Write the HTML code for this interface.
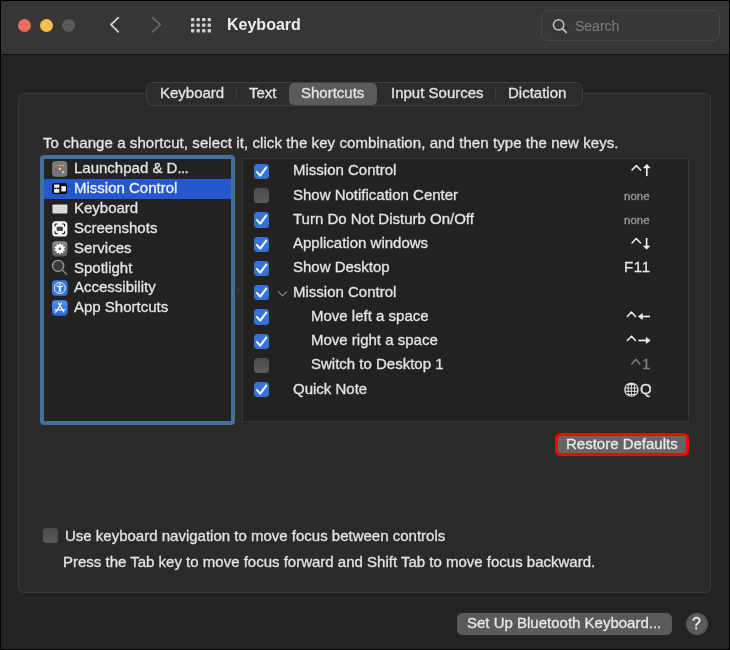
<!DOCTYPE html>
<html><head><meta charset="utf-8">
<style>
*{margin:0;padding:0;box-sizing:border-box}
html,body{width:730px;height:650px;overflow:hidden;background:#000}
body{position:relative;font-family:"Liberation Sans",sans-serif;color:#e4e4e4;font-size:15px}
.a{position:absolute}
.t{position:absolute;white-space:pre;line-height:20px;font-size:15px;will-change:transform;-webkit-text-stroke-width:0.3px}
</style></head><body>
<div class="a" style="left:1px;top:1px;width:728px;height:648px;background:#242322"></div>
<div class="a" style="left:1px;top:1px;width:728px;height:53px;background:#373635"></div>
<div class="a" style="left:1px;top:54px;width:728px;height:1px;background:#121212"></div>
<div class="a" style="left:17.55px;top:18.55px;width:13.5px;height:13.5px;border-radius:50%;background:#ec6a5e"></div>
<div class="a" style="left:39.55px;top:18.55px;width:13.5px;height:13.5px;border-radius:50%;background:#f4bf4f"></div>
<div class="a" style="left:61.65px;top:18.55px;width:13.5px;height:13.5px;border-radius:50%;background:#5b5b5b"></div>
<svg class="a" style="left:0;top:0" width="320" height="54"><polyline points="118.3,17.6 111.0,24.7 118.3,31.8" fill="none" stroke="#d2d2d2" stroke-width="1.8" stroke-linecap="round" stroke-linejoin="round"/><polyline points="152.5,17.6 160.3,24.7 152.5,31.8" fill="none" stroke="#676767" stroke-width="1.8" stroke-linecap="round" stroke-linejoin="round"/><g fill="#d0d0d0"><rect x="191.00" y="18.00" width="3.3" height="3.3" rx=".7"/><rect x="196.55" y="18.00" width="3.3" height="3.3" rx=".7"/><rect x="202.10" y="18.00" width="3.3" height="3.3" rx=".7"/><rect x="207.65" y="18.00" width="3.3" height="3.3" rx=".7"/><rect x="191.00" y="23.55" width="3.3" height="3.3" rx=".7"/><rect x="196.55" y="23.55" width="3.3" height="3.3" rx=".7"/><rect x="202.10" y="23.55" width="3.3" height="3.3" rx=".7"/><rect x="207.65" y="23.55" width="3.3" height="3.3" rx=".7"/><rect x="191.00" y="29.10" width="3.3" height="3.3" rx=".7"/><rect x="196.55" y="29.10" width="3.3" height="3.3" rx=".7"/><rect x="202.10" y="29.10" width="3.3" height="3.3" rx=".7"/><rect x="207.65" y="29.10" width="3.3" height="3.3" rx=".7"/></g></svg>
<div class="t" style="left:227.20px;top:15.46px;font-size:16px;color:#ececec;font-weight:bold;-webkit-text-stroke-width:0">Keyboard</div>
<div class="a" style="left:541px;top:10px;width:179px;height:31px;border:1px solid #484746;border-radius:7px;background:#383736"></div>
<svg class="a" style="left:540px;top:10px" width="40" height="31"><circle cx="18.6" cy="14.9" r="5.2" fill="none" stroke="#c2c2c2" stroke-width="1.5"/><line x1="22.4" y1="18.7" x2="26.2" y2="22.4" stroke="#c2c2c2" stroke-width="1.7" stroke-linecap="round"/></svg>
<div class="t" style="left:575.00px;top:15.95px;font-size:14px;color:#787878;-webkit-text-stroke-width:0.15px">Search</div>
<div class="a" style="left:18px;top:93px;width:693px;height:500px;border:1px solid #3a3a39;border-radius:6px;background:#2b2a29"></div>
<div class="a" style="left:146px;top:81.5px;width:437px;height:24.5px;border:1px solid #3f3f3f;border-radius:7px;background:#2c2c2c"></div>
<div class="a" style="left:289px;top:83px;width:88px;height:22px;border-radius:5px;background:#5b5b5b"></div>
<div class="a" style="left:235.5px;top:87px;width:1px;height:14px;background:#3b3b3b"></div>
<div class="a" style="left:495px;top:87px;width:1px;height:14px;background:#3b3b3b"></div>
<div class="t" style="left:159.50px;top:82.80px;color:#e4e4e4">Keyboard</div>
<div class="t" style="left:248.80px;top:82.80px;color:#e4e4e4">Text</div>
<div class="t" style="left:301.00px;top:82.80px;color:#e4e4e4">Shortcuts</div>
<div class="t" style="left:390.50px;top:82.80px;color:#e4e4e4">Input Sources</div>
<div class="t" style="left:507.50px;top:82.80px;color:#e4e4e4">Dictation</div>
<div class="t" style="left:42.50px;top:132.60px;letter-spacing:0.08px">To change a shortcut, select it, click the key combination, and then type the new keys.</div>
<div class="a" style="left:40px;top:155px;width:195px;height:270px;border:4px solid #44709e;border-radius:4px;background:#232221"></div>
<div class="a" style="left:44px;top:179px;width:187px;height:20px;background:#2558cd"></div>
<div class="t" style="left:73.50px;top:158.20px">Launchpad &amp; D<span style="letter-spacing:-0.6px">...</span></div>
<div class="t" style="left:73.50px;top:178.08px;color:#f2f2f2">Mission Control</div>
<div class="t" style="left:73.50px;top:197.96px">Keyboard</div>
<div class="t" style="left:73.50px;top:217.84px">Screenshots</div>
<div class="t" style="left:73.50px;top:237.72px">Services</div>
<div class="t" style="left:73.50px;top:257.60px">Spotlight</div>
<div class="t" style="left:73.50px;top:277.48px">Accessibility</div>
<div class="t" style="left:73.50px;top:297.36px">App Shortcuts</div>
<svg class="a" style="left:52px;top:161.00px" width="16" height="16" viewBox="0 0 16 16"><rect x="0.1" y="0.1" width="15.2" height="15.6" rx="3.6" fill="#7a7a7a"/><rect x="3.10" y="3.65" width="2" height="1.7" rx=".3" fill="#3fae45"/><rect x="6.80" y="3.65" width="2" height="1.7" rx=".3" fill="#f0b42a"/><rect x="10.10" y="3.65" width="2" height="1.7" rx=".3" fill="#eeb02a"/><rect x="3.10" y="7.05" width="2" height="1.7" rx=".3" fill="#e23232"/><rect x="6.80" y="7.05" width="2" height="1.7" rx=".3" fill="#e6e6e6"/><rect x="10.10" y="7.05" width="2" height="1.7" rx=".3" fill="#ef4b3c"/><rect x="3.10" y="10.25" width="2" height="1.7" rx=".3" fill="#8f45dd"/><rect x="6.80" y="10.25" width="2" height="1.7" rx=".3" fill="#2d7ae6"/><rect x="10.10" y="10.25" width="2" height="1.7" rx=".3" fill="#d8d8d8"/></svg>
<svg class="a" style="left:52px;top:180.90px" width="16" height="16" viewBox="0 0 16 16"><rect x="0.1" y="2.2" width="15" height="10.9" rx="2" fill="#050505"/><rect x="2" y="3.4" width="5.4" height="3.4" rx=".6" fill="#f0f0f0"/><rect x="2" y="8" width="5.4" height="3.8" rx=".6" fill="#f0f0f0"/><rect x="9.3" y="5" width="4.6" height="5.5" rx=".6" fill="#f0f0f0"/><rect x="4.2" y="7" width="1" height="1" fill="#3c3"/><rect x="11" y="10.3" width="2" height=".8" fill="#a4e"/></svg>
<svg class="a" style="left:51px;top:200.80px" width="18" height="16" viewBox="-1 0 18 16"><rect x="-0.3" y="3.1" width="16" height="9.8" rx="1" fill="#101010" opacity=".6"/><rect x="0.4" y="3.6" width="15" height="8.8" rx=".6" fill="#dedede"/><g fill="#c4c4c4"><rect x="1.4" y="5.9" width="13" height=".45"/><rect x="1.4" y="8" width="13" height=".45"/><rect x="1.4" y="10.1" width="13" height=".45"/></g></svg>
<svg class="a" style="left:52px;top:220.70px" width="16" height="16" viewBox="0 0 16 16"><rect x="0.2" y="0.3" width="15.2" height="15.2" rx="3.6" fill="#f4f4f4"/><path d="M3 5.4V3.8Q3 3 3.8 3H5.4M10.2 3h1.6q.8 0 .8.8V5.4M12.6 10.2v1.6q0 .8-.8.8H10.2M5.4 12.6H3.8Q3 12.6 3 11.8V10.2" fill="none" stroke="#151515" stroke-width="1.1"/><rect x="4.6" y="5.8" width="6.4" height="4.2" rx="1.3" fill="#4a4a4a"/><circle cx="7.8" cy="7.9" r="1.3" fill="#2a2a2a"/><circle cx="7.8" cy="7.9" r=".5" fill="#ddd"/></svg>
<svg class="a" style="left:52px;top:240.60px" width="16" height="16" viewBox="0 0 16 16"><defs><linearGradient id="gs" x1="0" y1="0" x2="0" y2="1"><stop offset="0" stop-color="#8c8c8c"/><stop offset="1" stop-color="#5c5c5c"/></linearGradient></defs><rect x="0.2" y="0.2" width="15.2" height="15.2" rx="3.6" fill="url(#gs)"/><rect x="7.0" y="2.5" width="1.6" height="2.6" rx=".3" transform="rotate(0 7.8 7.8)" fill="#fafafa"/><rect x="7.0" y="2.5" width="1.6" height="2.6" rx=".3" transform="rotate(36 7.8 7.8)" fill="#fafafa"/><rect x="7.0" y="2.5" width="1.6" height="2.6" rx=".3" transform="rotate(72 7.8 7.8)" fill="#fafafa"/><rect x="7.0" y="2.5" width="1.6" height="2.6" rx=".3" transform="rotate(108 7.8 7.8)" fill="#fafafa"/><rect x="7.0" y="2.5" width="1.6" height="2.6" rx=".3" transform="rotate(144 7.8 7.8)" fill="#fafafa"/><rect x="7.0" y="2.5" width="1.6" height="2.6" rx=".3" transform="rotate(180 7.8 7.8)" fill="#fafafa"/><rect x="7.0" y="2.5" width="1.6" height="2.6" rx=".3" transform="rotate(216 7.8 7.8)" fill="#fafafa"/><rect x="7.0" y="2.5" width="1.6" height="2.6" rx=".3" transform="rotate(252 7.8 7.8)" fill="#fafafa"/><rect x="7.0" y="2.5" width="1.6" height="2.6" rx=".3" transform="rotate(288 7.8 7.8)" fill="#fafafa"/><rect x="7.0" y="2.5" width="1.6" height="2.6" rx=".3" transform="rotate(324 7.8 7.8)" fill="#fafafa"/><circle cx="7.8" cy="7.8" r="4.1" fill="#fafafa"/><circle cx="7.8" cy="7.8" r="1.4" fill="#6c6c6c"/></svg>
<svg class="a" style="left:51px;top:259.30px" width="18" height="18" viewBox="0 0 18 18"><circle cx="7.1" cy="6.9" r="5.6" fill="#3a3a3a" stroke="#9a9a9a" stroke-width="1.3"/><line x1="11.2" y1="11" x2="15.6" y2="15.3" stroke="#8a8a8a" stroke-width="1.4" stroke-linecap="round"/></svg>
<svg class="a" style="left:52px;top:280.40px" width="16" height="16" viewBox="0 0 16 16"><rect x="0" y="0.3" width="15.6" height="15.4" rx="3.6" fill="#3a7ae0"/><circle cx="7.8" cy="8" r="5.5" fill="none" stroke="#f0f0f0" stroke-width="1"/><circle cx="7.8" cy="4.5" r="1.05" fill="#f4f4f4"/><path d="M5 6.1 L7.8 6.8 L10.6 6.1" stroke="#f4f4f4" stroke-width="1.2" stroke-linecap="round" stroke-linejoin="round" fill="none"/><path d="M6.9 6.6 H8.7 V9.2 L9.4 12.2 H8.4 L7.8 9.9 L7.2 12.2 H6.2 L6.9 9.2Z" fill="#f4f4f4"/></svg>
<svg class="a" style="left:52px;top:300.30px" width="16" height="16" viewBox="0 0 16 16"><defs><linearGradient id="ga" x1="0" y1="0" x2="0" y2="1"><stop offset="0" stop-color="#4d93ef"/><stop offset="1" stop-color="#2b66d6"/></linearGradient></defs><rect x="0" y="0.3" width="15.6" height="15.4" rx="3.6" fill="url(#ga)"/><path d="M9.4 3 L5 10.6 M6.6 3.4 L11.8 12 M2.8 9.8 H10 M11 9.8 H13 M3.6 12.2 L4.5 10.9" stroke="#f6f6f6" stroke-width="1.3" stroke-linecap="round" fill="none"/></svg>
<div class="a" style="left:235.2px;top:287.4px;width:5px;height:5px;border-radius:50%;background:#333333"></div>
<div class="a" style="left:242px;top:158px;width:447px;height:264px;border:1px solid #383837;background:#232221"></div>
<div class="a" style="left:254.2px;top:163.90px;width:15.2px;height:15.2px;border-radius:3.5px;background:#3573dc"><svg class="a" style="left:0;top:0" width="15" height="15"><polyline points="3,8.1 6.3,11.6 12.2,3.6" fill="none" stroke="#fff" stroke-width="2" stroke-linecap="round" stroke-linejoin="round"/></svg></div>
<div class="t" style="left:292.50px;top:160.30px">Mission Control</div>
<div class="a" style="left:254.2px;top:188.15px;width:15.2px;height:15.2px;border-radius:3.5px;background:linear-gradient(#4b4b4b,#5b5b5b)"></div>
<div class="t" style="left:292.50px;top:184.55px">Show Notification Center</div>
<div class="t" style="left:623.50px;top:185.57px;font-size:11.5px;color:#9a9a9a">none</div>
<div class="a" style="left:254.2px;top:212.40px;width:15.2px;height:15.2px;border-radius:3.5px;background:#3573dc"><svg class="a" style="left:0;top:0" width="15" height="15"><polyline points="3,8.1 6.3,11.6 12.2,3.6" fill="none" stroke="#fff" stroke-width="2" stroke-linecap="round" stroke-linejoin="round"/></svg></div>
<div class="t" style="left:292.50px;top:208.80px">Turn Do Not Disturb On/Off</div>
<div class="t" style="left:623.50px;top:209.82px;font-size:11.5px;color:#9a9a9a">none</div>
<div class="a" style="left:254.2px;top:236.65px;width:15.2px;height:15.2px;border-radius:3.5px;background:#3573dc"><svg class="a" style="left:0;top:0" width="15" height="15"><polyline points="3,8.1 6.3,11.6 12.2,3.6" fill="none" stroke="#fff" stroke-width="2" stroke-linecap="round" stroke-linejoin="round"/></svg></div>
<div class="t" style="left:292.50px;top:233.05px">Application windows</div>
<div class="a" style="left:254.2px;top:260.90px;width:15.2px;height:15.2px;border-radius:3.5px;background:#3573dc"><svg class="a" style="left:0;top:0" width="15" height="15"><polyline points="3,8.1 6.3,11.6 12.2,3.6" fill="none" stroke="#fff" stroke-width="2" stroke-linecap="round" stroke-linejoin="round"/></svg></div>
<div class="t" style="left:292.50px;top:257.30px">Show Desktop</div>
<div class="t" style="left:624.30px;top:257.30px;letter-spacing:0.7px">F11</div>
<div class="a" style="left:254.2px;top:285.15px;width:15.2px;height:15.2px;border-radius:3.5px;background:#3573dc"><svg class="a" style="left:0;top:0" width="15" height="15"><polyline points="3,8.1 6.3,11.6 12.2,3.6" fill="none" stroke="#fff" stroke-width="2" stroke-linecap="round" stroke-linejoin="round"/></svg></div>
<div class="t" style="left:292.50px;top:281.55px">Mission Control</div>
<svg class="a" style="left:276px;top:288.75px" width="14" height="10"><polyline points="2.6,2.8 6.6,6.9 10.6,2.8" fill="none" stroke="#8c8c8c" stroke-width="1.2" stroke-linecap="round" stroke-linejoin="round"/></svg>
<div class="a" style="left:254.2px;top:309.40px;width:15.2px;height:15.2px;border-radius:3.5px;background:#3573dc"><svg class="a" style="left:0;top:0" width="15" height="15"><polyline points="3,8.1 6.3,11.6 12.2,3.6" fill="none" stroke="#fff" stroke-width="2" stroke-linecap="round" stroke-linejoin="round"/></svg></div>
<div class="t" style="left:310.50px;top:305.80px">Move left a space</div>
<div class="a" style="left:254.2px;top:333.65px;width:15.2px;height:15.2px;border-radius:3.5px;background:#3573dc"><svg class="a" style="left:0;top:0" width="15" height="15"><polyline points="3,8.1 6.3,11.6 12.2,3.6" fill="none" stroke="#fff" stroke-width="2" stroke-linecap="round" stroke-linejoin="round"/></svg></div>
<div class="t" style="left:310.50px;top:330.05px">Move right a space</div>
<div class="a" style="left:254.2px;top:357.90px;width:15.2px;height:15.2px;border-radius:3.5px;background:linear-gradient(#4b4b4b,#5b5b5b)"></div>
<div class="t" style="left:310.50px;top:354.30px">Switch to Desktop 1</div>
<div class="t" style="left:641.50px;top:354.30px;color:#7c7c7c">1</div>
<div class="a" style="left:254.2px;top:382.15px;width:15.2px;height:15.2px;border-radius:3.5px;background:#3573dc"><svg class="a" style="left:0;top:0" width="15" height="15"><polyline points="3,8.1 6.3,11.6 12.2,3.6" fill="none" stroke="#fff" stroke-width="2" stroke-linecap="round" stroke-linejoin="round"/></svg></div>
<div class="t" style="left:292.50px;top:378.55px">Quick Note</div>
<div class="t" style="left:639.80px;top:378.85px">Q</div>
<svg class="a" style="left:600px;top:150px" width="60" height="260" viewBox="600 150 60 260"><polyline points="632.00,170.00 636.30,165.60 640.60,170.00" fill="none" stroke="#ececec" stroke-width="1.55" stroke-linecap="round" stroke-linejoin="round"/><path d="M646.8 165.10V176.10" stroke="#ececec" stroke-width="1.7" fill="none"/><path d="M643.5 167.90L646.8 164.30L650.1 167.90Z" fill="#ececec" stroke="#ececec" stroke-width=".6" stroke-linejoin="round"/><polyline points="632.00,242.95 636.30,238.55 640.60,242.95" fill="none" stroke="#ececec" stroke-width="1.55" stroke-linecap="round" stroke-linejoin="round"/><path d="M646.6 237.95V247.75" stroke="#ececec" stroke-width="1.7" fill="none"/><path d="M643.4 245.95L646.6 249.35L649.8 245.95Z" fill="#ececec" stroke="#ececec" stroke-width=".6" stroke-linejoin="round"/><polyline points="627.40,316.40 631.45,312.00 635.50,316.40" fill="none" stroke="#ececec" stroke-width="1.55" stroke-linecap="round" stroke-linejoin="round"/><path d="M640 316.50H650" stroke="#ececec" stroke-width="1.7" fill="none"/><path d="M642.4 313.40L638.4 316.50L642.4 319.60Z" fill="#ececec" stroke="#ececec" stroke-width=".6" stroke-linejoin="round"/><polyline points="627.40,340.55 631.45,336.15 635.50,340.55" fill="none" stroke="#ececec" stroke-width="1.55" stroke-linecap="round" stroke-linejoin="round"/><path d="M638.4 340.45H648" stroke="#ececec" stroke-width="1.7" fill="none"/><path d="M646.2 337.35L650.2 340.45L646.2 343.55Z" fill="#ececec" stroke="#ececec" stroke-width=".6" stroke-linejoin="round"/><polyline points="631.80,364.10 635.80,359.30 639.80,364.10" fill="none" stroke="#7a7a7a" stroke-width="1.5" stroke-linecap="round" stroke-linejoin="round"/><g><circle cx="631.4" cy="389.65" r="7.2" fill="#dadada"/><clipPath id="gc"><circle cx="631.4" cy="389.65" r="6.1"/></clipPath><g clip-path="url(#gc)" fill="#1c1c1c"><rect x="625.50" y="385.35" width="2.2" height="2.2" rx=".5"/><rect x="628.70" y="385.35" width="2.2" height="2.2" rx=".5"/><rect x="631.90" y="385.35" width="2.2" height="2.2" rx=".5"/><rect x="635.10" y="385.35" width="2.2" height="2.2" rx=".5"/><rect x="625.50" y="388.55" width="2.2" height="2.2" rx=".5"/><rect x="628.70" y="388.55" width="2.2" height="2.2" rx=".5"/><rect x="631.90" y="388.55" width="2.2" height="2.2" rx=".5"/><rect x="635.10" y="388.55" width="2.2" height="2.2" rx=".5"/><rect x="625.50" y="391.85" width="2.2" height="2.2" rx=".5"/><rect x="628.70" y="391.85" width="2.2" height="2.2" rx=".5"/><rect x="631.90" y="391.85" width="2.2" height="2.2" rx=".5"/><rect x="635.10" y="391.85" width="2.2" height="2.2" rx=".5"/><rect x="625.50" y="395.05" width="2.2" height="2.2" rx=".5"/><rect x="628.70" y="395.05" width="2.2" height="2.2" rx=".5"/><rect x="631.90" y="395.05" width="2.2" height="2.2" rx=".5"/><rect x="635.10" y="395.05" width="2.2" height="2.2" rx=".5"/></g></g></svg>
<div class="a" style="left:555px;top:433px;width:134px;height:23px;border:3.5px solid #fe0000;border-radius:5.5px;background:#656565"></div>
<div class="t" style="left:565.50px;top:433.80px;color:#e8e8e8">Restore Defaults</div>
<div class="a" style="left:43px;top:527.5px;width:15.2px;height:15.2px;border-radius:3.5px;background:linear-gradient(#4b4b4b,#5b5b5b)"></div>
<div class="t" style="left:65.00px;top:525.50px">Use keyboard navigation to move focus between controls</div>
<div class="t" style="left:62.80px;top:552.00px">Press the Tab key to move focus forward and Shift Tab to move focus backward.</div>
<div class="a" style="left:457px;top:612.5px;width:215px;height:22.5px;border-radius:5.5px;background:#5a5a5a"></div>
<div class="t" style="left:467.00px;top:613.00px;color:#e8e8e8">Set Up Bluetooth Keyboard...</div>
<div class="a" style="left:685.5px;top:612.7px;width:22px;height:22px;border-radius:50%;background:#5a5a5a"></div>
<div class="t" style="left:691.80px;top:613.96px;font-size:16px;color:#eeeeee">?</div>
</body></html>
